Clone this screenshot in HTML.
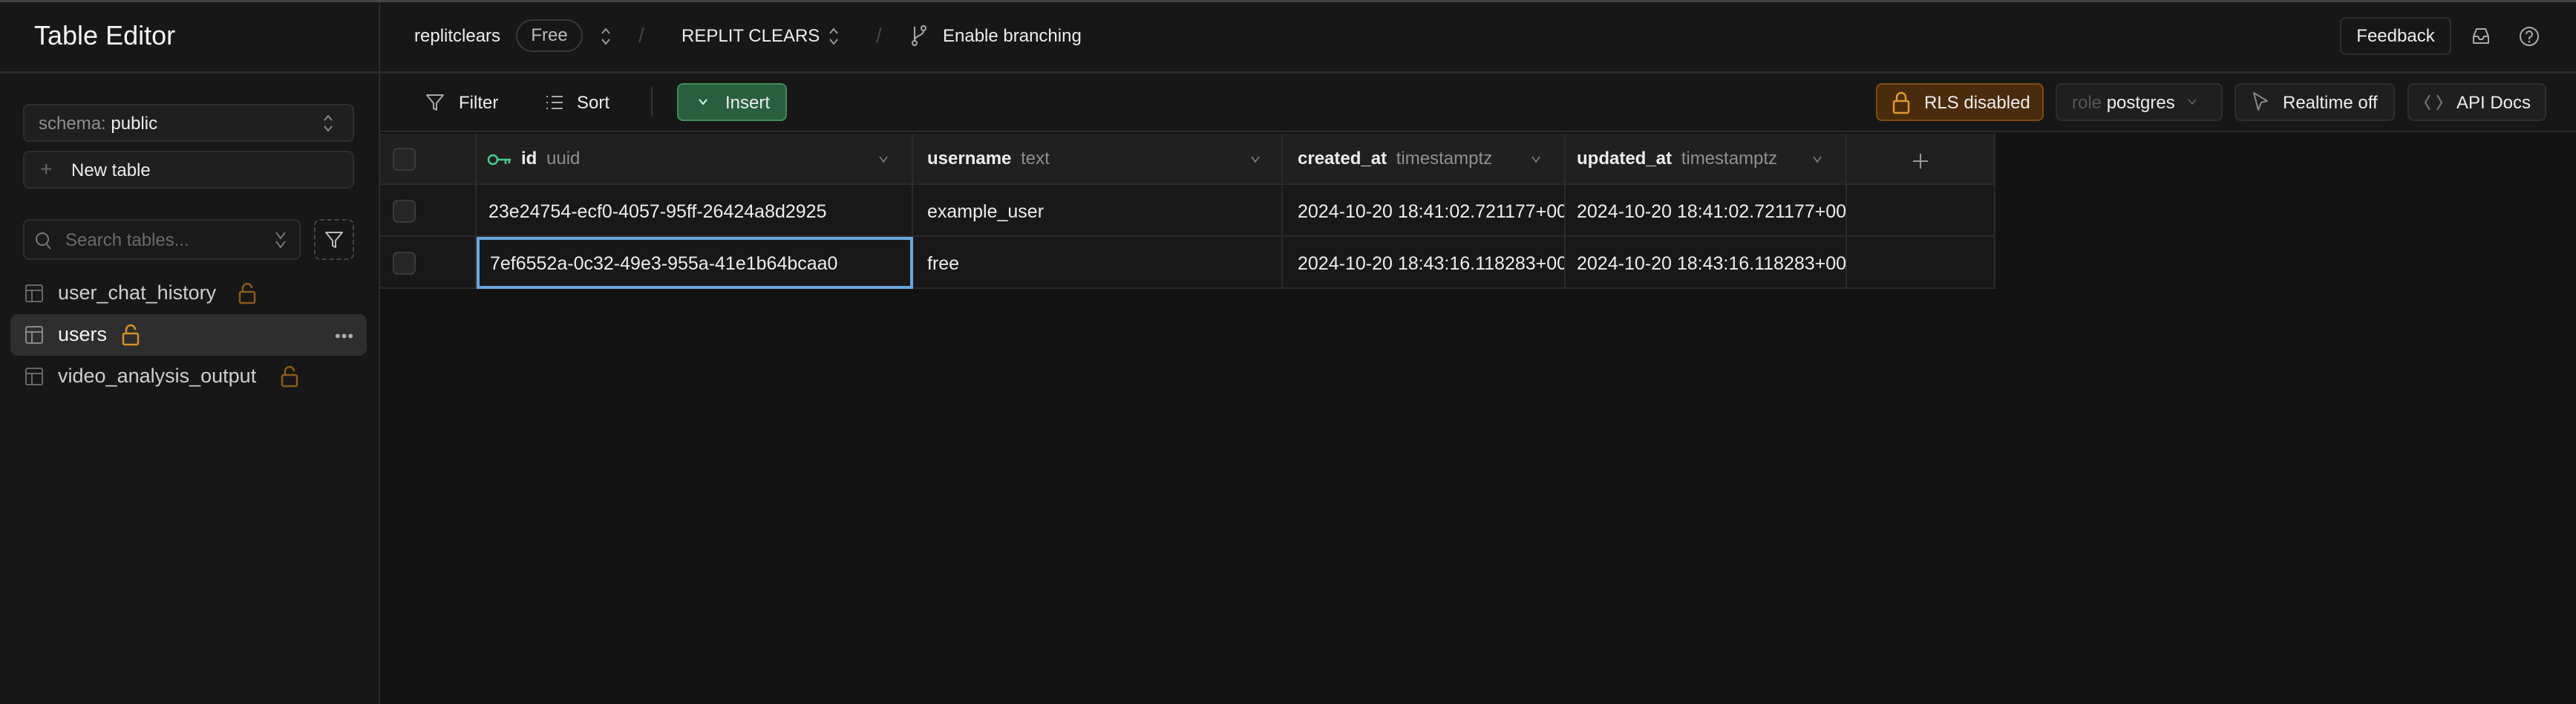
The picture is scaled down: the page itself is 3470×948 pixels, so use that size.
<!DOCTYPE html>
<html><head><meta charset="utf-8"><style>
*{box-sizing:border-box;margin:0;padding:0}
body{width:3470px;height:948px;background:#121212;font-family:"Liberation Sans",sans-serif;color:#ededed;position:relative;overflow:hidden;font-size:24px}
.a{position:absolute;white-space:nowrap}
.g{color:#8f8f8f}
.btn{position:absolute;border:2px solid #2e2e2e;border-radius:8px;background:#1f1f1f}
.cell{position:absolute;overflow:hidden;white-space:nowrap;border-right:2px solid #2a2a2a;border-bottom:2px solid #2a2a2a;font-size:25px;line-height:72px}
.cb{position:absolute;left:17px;width:31px;height:31px;border:2px solid #3a3a3a;border-radius:7px;background:#262626}
svg{position:absolute}
</style></head><body>
<div class="a" style="left:0;top:0;width:3470px;height:3px;background:#444"></div>
<!-- top bar -->
<div class="a" style="left:0;top:3px;width:3470px;height:93px;background:#171717"></div>
<div class="a" style="left:0;top:96px;width:3470px;height:3px;background:#2a2a2a"></div>
<div class="a" style="left:46px;top:27px;font-size:36px;color:#f5f5f5">Table Editor</div>
<div class="a" style="left:510px;top:3px;width:2px;height:945px;background:#2a2a2a"></div>
<div class="a" style="left:558px;top:35px;">replitclears</div>
<div class="a" style="left:695px;top:26px;width:90px;height:44px;border:2px solid #3a3a3a;border-radius:22px;color:#bbb;text-align:center;line-height:40px">Free</div>
<svg style="left:806px;top:34px" width="20" height="30" viewBox="0 0 20 30"><path d="M5 11l5-6 5 6M5 19l5 6 5-6" stroke="#999" stroke-width="2" fill="none"/></svg>
<div class="a g" style="left:860px;top:32px;color:#444;font-size:28px">/</div>
<div class="a" style="left:918px;top:35px;">REPLIT CLEARS</div>
<svg style="left:1113px;top:34px" width="20" height="30" viewBox="0 0 20 30"><path d="M5 11l5-6 5 6M5 19l5 6 5-6" stroke="#999" stroke-width="2" fill="none"/></svg>
<div class="a g" style="left:1180px;top:32px;color:#444;font-size:28px">/</div>
<svg style="left:1224px;top:32px" width="30" height="32" viewBox="0 0 30 32"><circle cx="8" cy="26" r="3" stroke="#aaa" stroke-width="2" fill="none"/><circle cx="20" cy="6" r="3" stroke="#aaa" stroke-width="2" fill="none"/><path d="M8 4v19M20 9c0 8-12 6-12 14" stroke="#aaa" stroke-width="2" fill="none"/></svg>
<div class="a" style="left:1270px;top:35px;">Enable branching</div>
<div class="btn" style="left:3152px;top:23px;width:150px;height:51px;background:#171717;text-align:center;line-height:47px">Feedback</div>
<svg style="left:3328px;top:35px" width="28" height="28" viewBox="0 0 28 28"><path d="M4 14l4-10h12l4 10v9H4z M4 14h6l2 4h4l2-4h6" stroke="#aaa" stroke-width="2" fill="none" stroke-linejoin="round"/></svg>
<svg style="left:3392px;top:34px" width="30" height="30" viewBox="0 0 30 30"><circle cx="15" cy="15" r="12" stroke="#aaa" stroke-width="2" fill="none"/><path d="M11 12a4 4 0 1 1 5 4c-1 .5-1 1-1 3" stroke="#aaa" stroke-width="2" fill="none"/><circle cx="15" cy="22" r="1.3" fill="#aaa"/></svg>
<!-- sidebar -->
<div class="a" style="left:0;top:99px;width:510px;height:849px;background:#171717"></div>
<div class="btn" style="left:31px;top:140px;width:446px;height:51px;"></div>
<div class="a g" style="left:52px;top:153px;">schema: <span style="color:#ededed">public</span></div>
<svg style="left:432px;top:152px" width="20" height="28" viewBox="0 0 20 28"><path d="M5 10l5-6 5 6M5 18l5 6 5-6" stroke="#888" stroke-width="2" fill="none"/></svg>
<div class="btn" style="left:31px;top:203px;width:446px;height:51px;"></div>
<div class="a g" style="left:54px;top:212px;font-size:28px;color:#666">+</div>
<div class="a" style="left:96px;top:216px;">New table</div>
<div class="btn" style="left:31px;top:295px;width:374px;height:55px;background:#1a1a1a"></div>
<svg style="left:46px;top:310px" width="26" height="28" viewBox="0 0 26 28"><circle cx="11" cy="12" r="8" stroke="#777" stroke-width="2" fill="none"/><path d="M17 19l5 6" stroke="#777" stroke-width="2"/></svg>
<div class="a" style="left:88px;top:310px;color:#6a6a6a">Search tables...</div>
<svg style="left:368px;top:309px" width="20" height="30" viewBox="0 0 20 30"><path d="M4 4l6 8 6-8M4 16l6 8 6-8" stroke="#777" stroke-width="2" fill="none"/></svg>
<div class="a" style="left:423px;top:295px;width:54px;height:55px;border:2px dashed #444;border-radius:8px"></div>
<svg style="left:436px;top:309px" width="28" height="28" viewBox="0 0 28 28"><path d="M3 4h22l-9 11v9l-4-2v-7z" stroke="#bbb" stroke-width="2" fill="none" stroke-linejoin="round"/></svg>
<div class="a" style="left:14px;top:423px;width:480px;height:56px;background:#2e2e2e;border-radius:10px"></div>
<svg style="left:33px;top:382px" width="26" height="26" viewBox="0 0 26 26"><rect x="2" y="2" width="22" height="22" rx="2" stroke="#666" stroke-width="2" fill="none"/><path d="M2 9h22M10 9v15" stroke="#666" stroke-width="2"/></svg>
<div class="a" style="left:78px;top:379px;color:#cfcfcf;font-size:27px">user_chat_history</div>
<svg style="left:320px;top:380px" width="26" height="30" viewBox="0 0 26 30"><rect x="3" y="13" width="20" height="15" rx="2" stroke="#8a5a18" stroke-width="2.5" fill="none"/><path d="M7 13V8a6 6 0 0 1 12 0" stroke="#8a5a18" stroke-width="2.5" fill="none"/></svg>
<svg style="left:33px;top:438px" width="26" height="26" viewBox="0 0 26 26"><rect x="2" y="2" width="22" height="22" rx="2" stroke="#888" stroke-width="2" fill="none"/><path d="M2 9h22M10 9v15" stroke="#888" stroke-width="2"/></svg>
<div class="a" style="left:78px;top:435px;color:#f5f5f5;font-size:27px">users</div>
<svg style="left:163px;top:436px" width="26" height="30" viewBox="0 0 26 30"><rect x="3" y="13" width="20" height="15" rx="2" stroke="#d88f25" stroke-width="2.5" fill="none"/><path d="M7 13V8a6 6 0 0 1 12 0" stroke="#d88f25" stroke-width="2.5" fill="none"/></svg>
<div class="a" style="left:451px;top:440px;color:#aaa;font-size:22px;letter-spacing:1px">•••</div>
<svg style="left:33px;top:494px" width="26" height="26" viewBox="0 0 26 26"><rect x="2" y="2" width="22" height="22" rx="2" stroke="#666" stroke-width="2" fill="none"/><path d="M2 9h22M10 9v15" stroke="#666" stroke-width="2"/></svg>
<div class="a" style="left:78px;top:491px;color:#cfcfcf;font-size:27px">video_analysis_output</div>
<svg style="left:377px;top:492px" width="26" height="30" viewBox="0 0 26 30"><rect x="3" y="13" width="20" height="15" rx="2" stroke="#8a5a18" stroke-width="2.5" fill="none"/><path d="M7 13V8a6 6 0 0 1 12 0" stroke="#8a5a18" stroke-width="2.5" fill="none"/></svg>
<!-- toolbar -->
<div class="a" style="left:512px;top:99px;width:2958px;height:79px;background:#171717;border-bottom:2px solid #2a2a2a"></div>
<svg style="left:572px;top:124px" width="28" height="28" viewBox="0 0 28 28"><path d="M3 4h22l-9 11v9l-4-2v-7z" stroke="#aaa" stroke-width="2" fill="none" stroke-linejoin="round"/></svg>
<div class="a" style="left:618px;top:125px;">Filter</div>
<svg style="left:734px;top:126px" width="26" height="24" viewBox="0 0 26 24"><path d="M2 4h2M2 12h2M2 20h2M9 4h15M9 12h15M9 20h15" stroke="#aaa" stroke-width="2"/></svg>
<div class="a" style="left:777px;top:125px;">Sort</div>
<div class="a" style="left:877px;top:117px;width:2px;height:40px;background:#333"></div>
<div class="a" style="left:912px;top:112px;width:148px;height:51px;background:#295f3e;border:2px solid #3e8e5a;border-radius:8px"></div>
<svg style="left:938px;top:128px" width="18" height="18" viewBox="0 0 18 18"><path d="M4 6l5 6 5-6" stroke="#cfe" stroke-width="2" fill="none"/></svg>
<div class="a" style="left:977px;top:125px;">Insert</div>
<div class="a" style="left:2527px;top:112px;width:226px;height:51px;background:#4a2c0c;border:2px solid #7c4b14;border-radius:8px"></div>
<svg style="left:2548px;top:122px" width="26" height="32" viewBox="0 0 26 32"><rect x="3" y="14" width="20" height="16" rx="2" stroke="#e09a2e" stroke-width="2.5" fill="none"/><path d="M7 14V9a6 6 0 0 1 12 0v5" stroke="#e09a2e" stroke-width="2.5" fill="none"/></svg>
<div class="a" style="left:2592px;top:125px;">RLS disabled</div>
<div class="btn" style="left:2769px;top:112px;width:225px;height:51px;"></div>
<div class="a" style="left:2791px;top:125px;color:#555">role <span style="color:#ededed">postgres</span></div>
<svg style="left:2945px;top:130px" width="16" height="14" viewBox="0 0 16 14"><path d="M3 4l5 6 5-6" stroke="#666" stroke-width="1.5" fill="none"/></svg>
<div class="btn" style="left:3010px;top:112px;width:216px;height:51px;"></div>
<svg style="left:3032px;top:122px" width="26" height="30" viewBox="0 0 26 30"><path d="M4 3l18 11-8 2-4 10z" stroke="#888" stroke-width="2" fill="none" stroke-linejoin="round"/></svg>
<div class="a" style="left:3075px;top:125px;">Realtime off</div>
<div class="btn" style="left:3243px;top:112px;width:187px;height:51px;"></div>
<svg style="left:3264px;top:124px" width="28" height="28" viewBox="0 0 28 28"><path d="M9 4l-6 10 6 10M19 4l6 10-6 10" stroke="#777" stroke-width="2" fill="none"/></svg>
<div class="a" style="left:3309px;top:125px;">API Docs</div>
<!-- table header -->
<div class="a" style="left:512px;top:180px;width:2176px;height:69px;background:#202020"></div>
<div class="cell" style="left:512px;top:180px;width:130px;height:69px"><div class="cb" style="top:19px"></div></div>
<div class="cell" style="left:642px;top:180px;width:588px;height:69px"></div>
<svg style="left:656px;top:206px" width="34" height="18" viewBox="0 0 34 18"><circle cx="8" cy="9" r="6" stroke="#3ecf8e" stroke-width="2.5" fill="none"/><path d="M14 9h18M25 9v6M30 9v5" stroke="#3ecf8e" stroke-width="2.5"/></svg>
<div class="a" style="left:702px;top:200px;font-weight:bold">id <span class="g" style="font-weight:normal;margin-left:6px">uuid</span></div>
<svg style="left:1182px;top:208px" width="16" height="14" viewBox="0 0 16 14"><path d="M3 3l5 7 5-7" stroke="#888" stroke-width="1.5" fill="none"/></svg>
<div class="cell" style="left:1230px;top:180px;width:498px;height:69px"></div>
<div class="a" style="left:1249px;top:200px;font-weight:bold">username <span class="g" style="font-weight:normal;margin-left:6px">text</span></div>
<svg style="left:1683px;top:208px" width="16" height="14" viewBox="0 0 16 14"><path d="M3 3l5 7 5-7" stroke="#888" stroke-width="1.5" fill="none"/></svg>
<div class="cell" style="left:1728px;top:180px;width:381px;height:69px"></div>
<div class="a" style="left:1748px;top:200px;font-weight:bold">created_at <span class="g" style="font-weight:normal;margin-left:6px">timestamptz</span></div>
<svg style="left:2061px;top:208px" width="16" height="14" viewBox="0 0 16 14"><path d="M3 3l5 7 5-7" stroke="#888" stroke-width="1.5" fill="none"/></svg>
<div class="cell" style="left:2109px;top:180px;width:379px;height:69px"></div>
<div class="a" style="left:2124px;top:200px;font-weight:bold">updated_at <span class="g" style="font-weight:normal;margin-left:6px">timestamptz</span></div>
<svg style="left:2440px;top:208px" width="16" height="14" viewBox="0 0 16 14"><path d="M3 3l5 7 5-7" stroke="#888" stroke-width="1.5" fill="none"/></svg>
<div class="cell" style="left:2488px;top:180px;width:200px;height:69px"></div>
<svg style="left:2575px;top:205px" width="24" height="24" viewBox="0 0 24 24"><path d="M12 2v20M2 12h20" stroke="#999" stroke-width="2"/></svg>
<!-- rows -->
<div class="a" style="left:512px;top:249px;width:2176px;height:139px;background:#181818"></div>
<div class="cell" style="left:512px;top:249px;width:130px;height:70px"><div class="cb" style="top:20px"></div></div>
<div class="cell" style="left:642px;top:249px;width:588px;height:70px;padding-left:16px">23e24754-ecf0-4057-95ff-26424a8d2925</div>
<div class="cell" style="left:1230px;top:249px;width:498px;height:70px;padding-left:19px">example_user</div>
<div class="cell" style="left:1728px;top:249px;width:381px;height:70px;padding-left:20px">2024-10-20 18:41:02.721177+00</div>
<div class="cell" style="left:2109px;top:249px;width:379px;height:70px;padding-left:15px">2024-10-20 18:41:02.721177+00</div>
<div class="cell" style="left:2488px;top:249px;width:200px;height:70px"></div>
<div class="cell" style="left:512px;top:319px;width:130px;height:70px"><div class="cb" style="top:20px"></div></div>
<div class="cell" style="left:642px;top:319px;width:588px;height:70px;padding-left:14px;border:4px solid #6aa6dd;line-height:64px">7ef6552a-0c32-49e3-955a-41e1b64bcaa0</div>
<div class="cell" style="left:1230px;top:319px;width:498px;height:70px;padding-left:19px">free</div>
<div class="cell" style="left:1728px;top:319px;width:381px;height:70px;padding-left:20px">2024-10-20 18:43:16.118283+00</div>
<div class="cell" style="left:2109px;top:319px;width:379px;height:70px;padding-left:15px">2024-10-20 18:43:16.118283+00</div>
<div class="cell" style="left:2488px;top:319px;width:200px;height:70px"></div>
</body></html>
